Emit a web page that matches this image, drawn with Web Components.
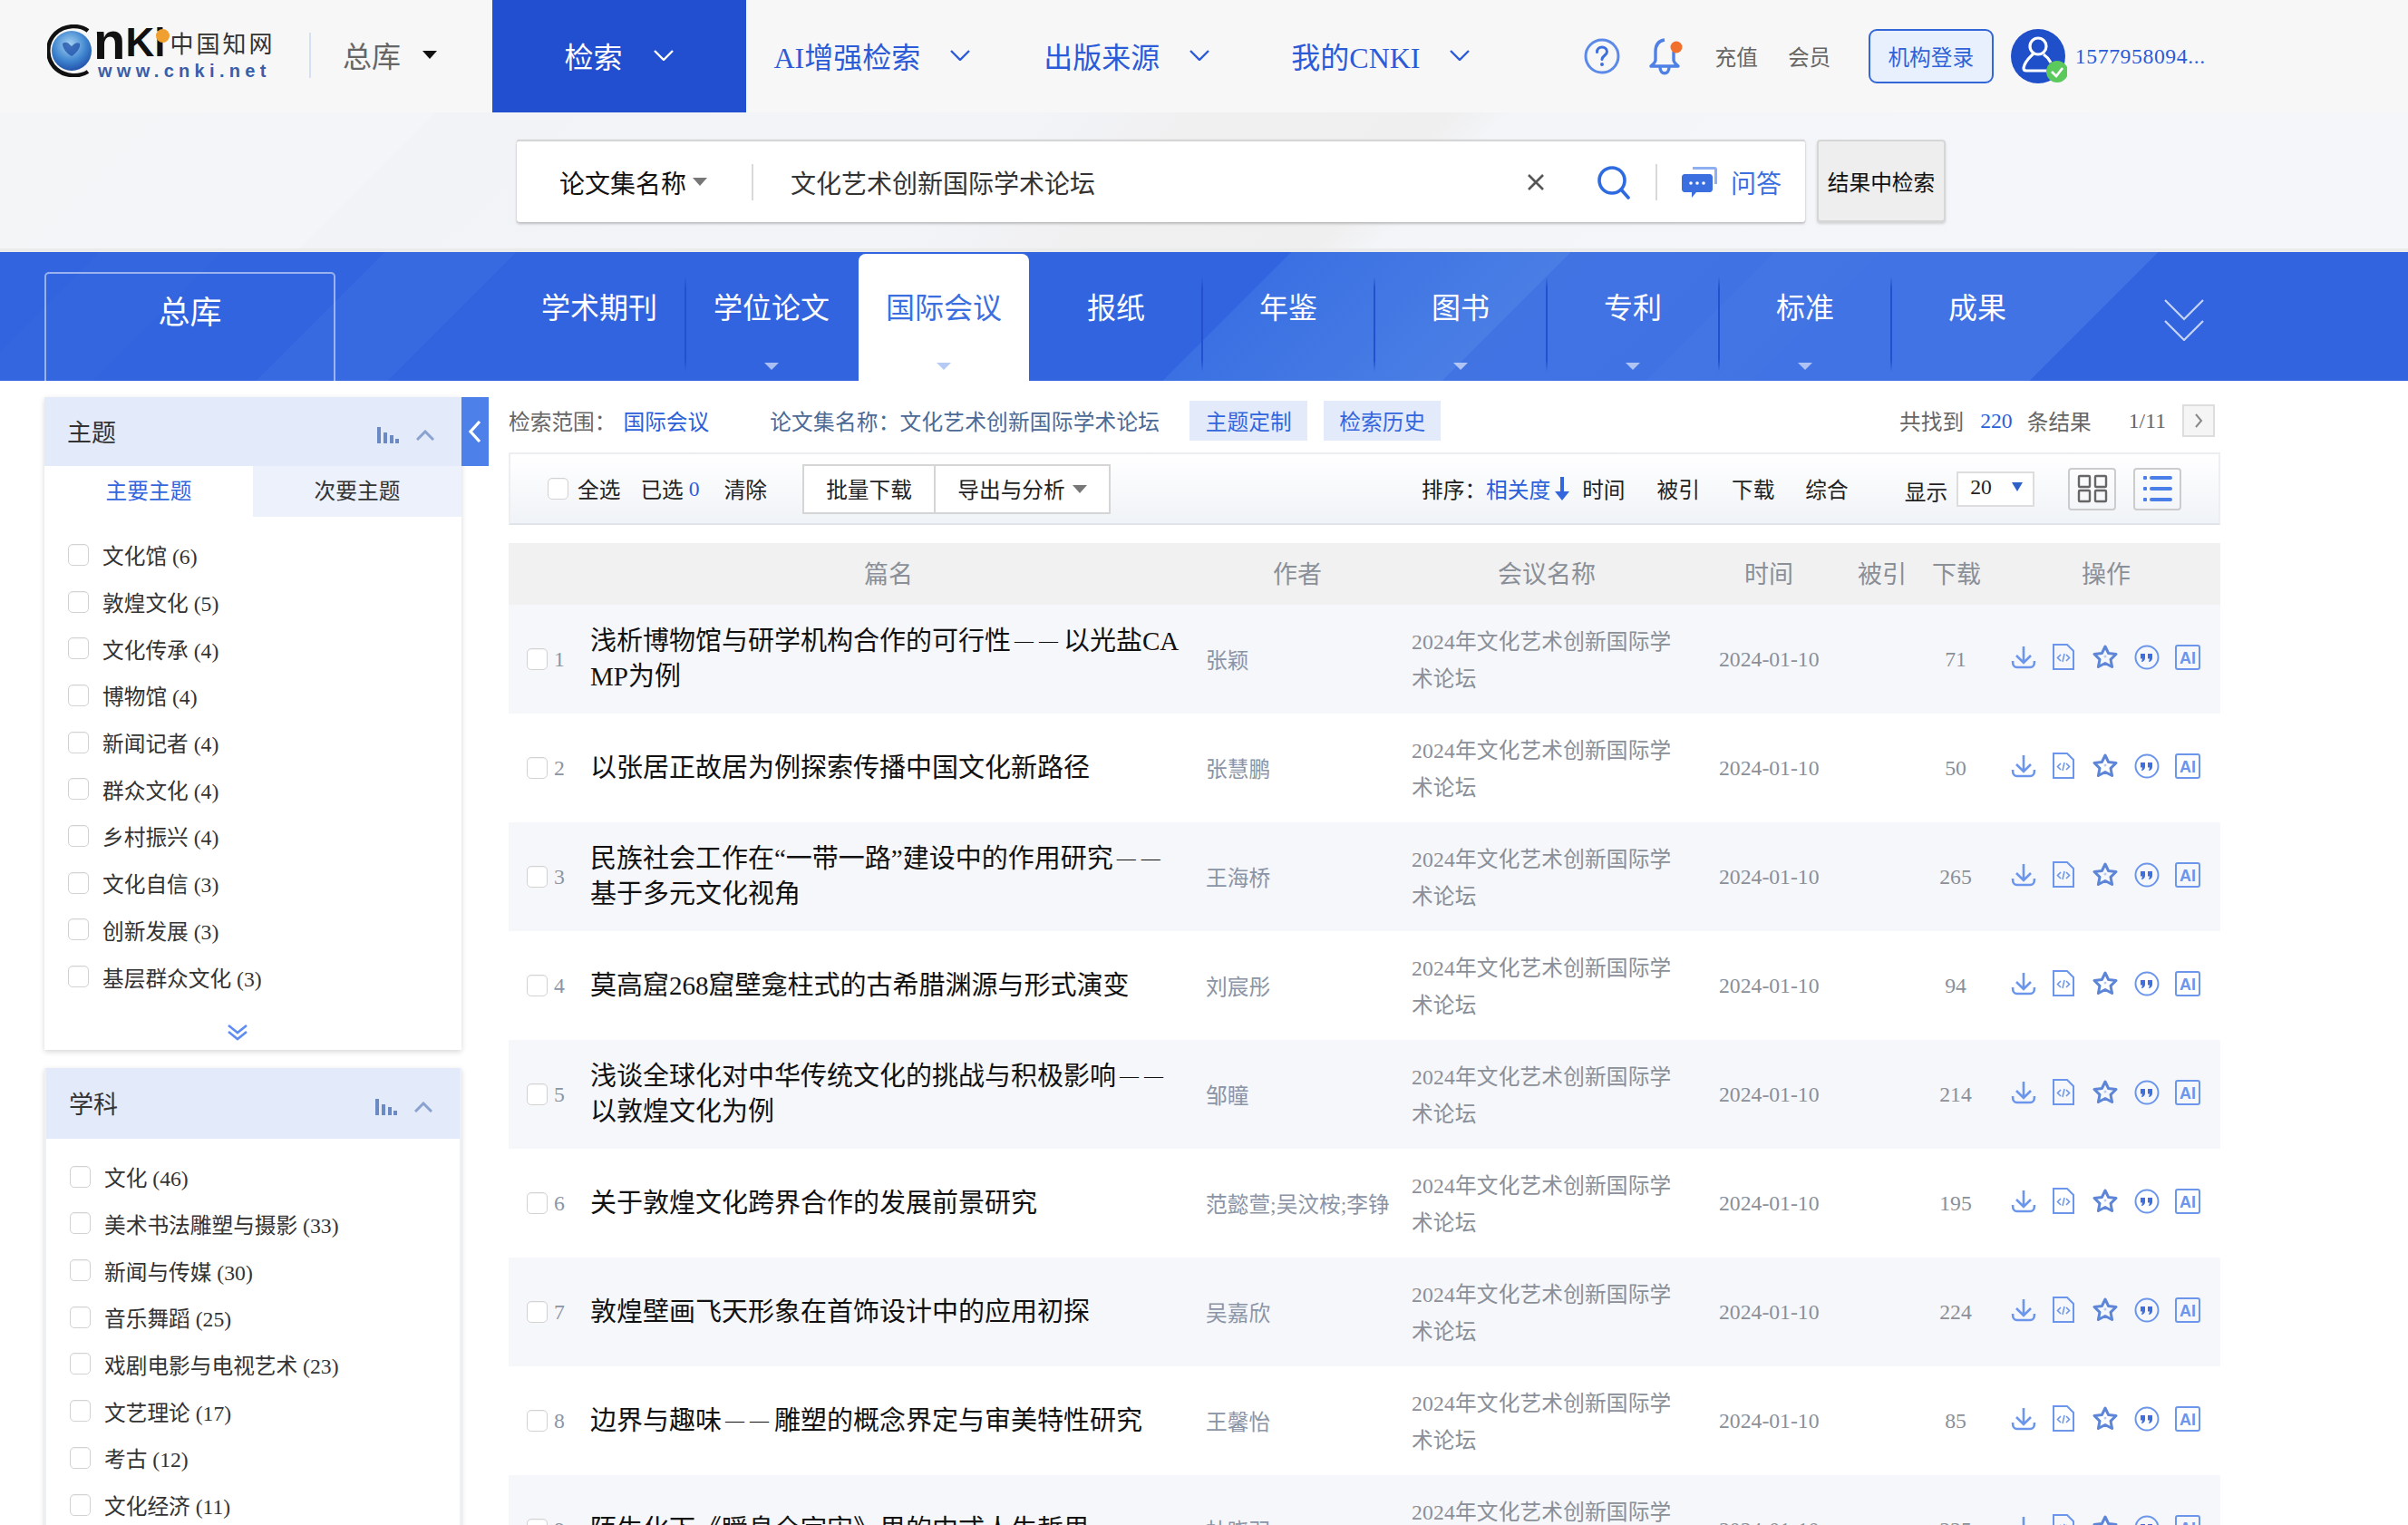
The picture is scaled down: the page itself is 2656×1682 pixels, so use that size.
<!DOCTYPE html>
<html lang="zh-CN">
<head>
<meta charset="utf-8">
<title>文化艺术创新国际学术论坛</title>
<style>
  html, body { margin: 0; height: 100%; overflow: hidden; background: #fff; }
  body { font-family: "Liberation Serif", "Noto Sans CJK SC", serif; font-size: 23.7px; color: #333; }
</style>
</head>
<body>
<cnki-topbar></cnki-topbar>
<cnki-searchbar></cnki-searchbar>
<cnki-dbtabs></cnki-dbtabs>
<cnki-layout>
  <cnki-filter slot="side" heading="主题" tabs items="文化馆 (6)|敦煌文化 (5)|文化传承 (4)|博物馆 (4)|新闻记者 (4)|群众文化 (4)|乡村振兴 (4)|文化自信 (3)|创新发展 (3)|基层群众文化 (3)" more></cnki-filter>
  <cnki-filter slot="side" heading="学科" boxed items="文化 (46)|美术书法雕塑与摄影 (33)|新闻与传媒 (30)|音乐舞蹈 (25)|戏剧电影与电视艺术 (23)|文艺理论 (17)|考古 (12)|文化经济 (11)"></cnki-filter>
  <cnki-crumbs></cnki-crumbs>
  <cnki-toolbar></cnki-toolbar>
  <cnki-results></cnki-results>
</cnki-layout>

<script>
const chev = (color, w = 22, h = 12, sw = 2.4) =>
  `<svg width="${w}" height="${h}" viewBox="0 0 22 12" preserveAspectRatio="none" fill="none" stroke="${color}" stroke-width="${sw}"><path d="M1 1l10 10L21 1"/></svg>`;

class CheckBox extends HTMLElement {
  constructor() {
    super();
    this.attachShadow({ mode: "open" }).innerHTML = `
      <style>
        :host { display: inline-block; width: 23px; height: 24px; box-sizing: border-box; flex: none;
          background: #fff; border: 1.5px solid #d2d2d2; border-radius: 5px; box-shadow: inset 0 1px 1px rgba(0,0,0,.05); }
      </style>`;
  }
}
customElements.define("cnki-check", CheckBox);

class TopBar extends HTMLElement {
  constructor() {
    super();
    this.attachShadow({ mode: "open" }).innerHTML = `
      <style>
        :host { display: flex; align-items: stretch; height: 124px; background: #f7f7f7; }
        .logo { display: grid; grid-template-columns: 51px auto; width: 250px; height: 60px; margin: 27px 0 0 52px; font-family: "Liberation Sans", sans-serif; flex: none; }
        .logo svg { grid-row: 1 / span 2; }
        .brand { display: flex; align-items: flex-start; height: 42px; position: relative; color: #111; font-weight: 700; line-height: 40px; }
        .brand .n { font-size: 58px; line-height: 36px; }
        .brand .k { font-size: 44px; }
        .brand .dot { position: absolute; left: 69px; top: 5px; width: 15px; height: 15px; border-radius: 50%; background: #f0a030; }
        .brand .cn { font: 400 26px/40px "Noto Sans CJK SC", sans-serif; color: #333; margin-left: 5px; letter-spacing: 3px; white-space: nowrap; }
        .www { font-size: 20px; font-weight: 700; color: #3a5ea8; letter-spacing: 5.3px; line-height: 18px; margin-left: 5px; white-space: nowrap; }
        .sep { width: 2px; height: 50px; background: #d6e0f3; margin: 36px 0 0 39px; flex: none; }
        .lib { display: flex; align-items: center; gap: 24px; width: 199.5px; padding: 0 0 4px 35px; box-sizing: border-box; font-size: 32px; color: #666; flex: none; }
        .tri { width: 0; height: 0; border: 8px solid transparent; border-top: 9px solid #111; border-bottom: 0; margin-top: 0; }
        nav { display: flex; align-items: center; color: #2b5bd7; font-size: 32px; white-space: nowrap; }
        nav a { display: flex; align-items: center; height: 100%; padding-bottom: 3px; box-sizing: border-box; }
        .on { background: #214fd0; color: #fff; width: 280px; padding-left: 80px; box-sizing: border-box; gap: 34px; }
        .i1 { margin-left: 31px; gap: 33px; }
        .i2 { margin-left: 81px; gap: 33px; }
        .i3 { margin-left: 90px; gap: 32px; }
        .help { margin-left: 126px; align-self: center; }
        .bell { margin-left: 32px; align-self: center; }
        .small { align-self: center; color: #666; }
        .btn { align-self: center; height: 60px; width: 138px; box-sizing: border-box; margin-left: 41.5px; border: 2px solid #3366d6; border-radius: 9px; background: #e9f0fd; color: #2f62d8; display: flex; align-items: center; justify-content: center; }
        .avatar { align-self: center; margin-left: 19px; }
        .user { align-self: center; margin-left: 9px; letter-spacing: .6px; color: #2b5bd7; white-space: nowrap; }
      </style>
      <div class="logo">
        <svg width="52" height="58" viewBox="0 0 52 58">
          <defs><radialGradient id="g" cx=".45" cy=".35" r=".75"><stop offset="0" stop-color="#a8d4f4"/><stop offset=".55" stop-color="#3f85cf"/><stop offset="1" stop-color="#173f9c"/></radialGradient></defs>
          <path d="M45 7C36 0 20 0 9 10C-2 21-1 39 10 49C20 58 36 58 45 52" fill="none" stroke="#111" stroke-width="4.5"/>
          <circle cx="27" cy="29" r="22" fill="url(#g)"/>
          <path d="M17 21c4-3 7 0 10 3c3-3 6-5 9-3c1 5-4 11-9 14c-5-3-10-8-10-14z" fill="#1f4fa8" opacity=".75"/>
        </svg>
        <div class="brand"><span class="n">n</span><span class="k">Ki</span><i class="dot"></i><span class="cn">中国知网</span></div>
        <div class="www">www.cnki.net</div>
      </div>
      <div class="sep"></div>
      <div class="lib">总库<i class="tri"></i></div>
      <nav>
        <a class="on">检索 ${chev("#fff")}</a>
        <a class="i1">AI增强检索 ${chev("#2b5bd7")}</a>
        <a class="i2">出版来源 ${chev("#2b5bd7")}</a>
        <a class="i3">我的CNKI ${chev("#2b5bd7")}</a>
      </nav>
      <svg class="help" width="40" height="40" viewBox="0 0 40 40" fill="none"><circle cx="20" cy="20" r="18" stroke="#5c8ae8" stroke-width="3"/><path d="M14.5 15.5c0-3.5 2.5-5.5 5.5-5.5s5.5 2 5.5 5c0 4-5.5 4.5-5.5 8.500" stroke="#3f6fdc" stroke-width="3" stroke-linecap="round"/><circle cx="20" cy="29" r="2" fill="#3f6fdc"/></svg>
      <svg class="bell" width="38" height="42" viewBox="0 0 38 42" fill="none"><path d="M17 3c-7 1-10 6-10 13v9c0 3-3 5-5 7h30c-2-2-5-4-5-7v-9" stroke="#4f80e6" stroke-width="3.4" stroke-linejoin="round"/><path d="M12 33c0 9 10 9 10 0" stroke="#4f80e6" stroke-width="3.4"/><circle cx="30" cy="11" r="6.500" fill="#f0702c"/></svg>
      <span class="small" style="margin-left:35px">充值</span>
      <span class="small" style="margin-left:33px">会员</span>
      <div class="btn">机构登录</div>
      <svg class="avatar" width="62" height="62" viewBox="0 0 62 62" fill="none">
        <circle cx="30" cy="31" r="30" fill="#1f4fc9"/>
        <circle cx="30" cy="20" r="9" stroke="#fff" stroke-width="3.2"/>
        <path d="M24 29c-3 3-9 8-10 15c0 2 1 3 3 3h28" stroke="#fff" stroke-width="3.2" stroke-linecap="round"/>
        <path d="M36 29c3 2 6 5 8 9" stroke="#fff" stroke-width="3.2"/>
        <circle cx="51" cy="48" r="12" fill="#5cc95c"/>
        <path d="M45 48l5 5 7-9" stroke="#fff" stroke-width="2.800"/>
      </svg>
      <span class="user">1577958094...</span>`;
  }
}
customElements.define("cnki-topbar", TopBar);

class SearchBar extends HTMLElement {
  constructor() {
    super();
    this.attachShadow({ mode: "open" }).innerHTML = `
      <style>
        :host { display: flex; align-items: flex-start; height: 154px; box-sizing: border-box; padding: 30px 0 0 570px; border-bottom: 4px solid #ebebeb; font-size: 28px;
          background: linear-gradient(135deg, #f4f5f7 0, #f3f5f8 340px, #f1f3f7 340px, #f2f4f8 800px, #f0f0f1 930px, #efefef 1130px, #f3f5f8 1180px, #f4f6f9 1800px); }
        .box { display: flex; align-items: center; width: 1421px; height: 91px; box-sizing: border-box; background: #fff; border-top: 2px solid #d6d6d6; border-radius: 3px; box-shadow: 0 2px 3px rgba(0,0,0,.22), 0 0 1px rgba(0,0,0,.25); }
        .field { width: 259px; padding-left: 47px; box-sizing: border-box; display: flex; align-items: center; gap: 7px; color: #111; }
        .tri { width: 0; height: 0; border: 8px solid transparent; border-top: 9px solid #777; border-bottom: 0; }
        .sep { width: 2px; height: 40px; background: #d9d9d9; flex: none; }
        .q { margin-left: 41px; width: 812px; color: #333; white-space: nowrap; }
        .clear { margin-right: 57px; }
        .search { margin-right: 27px; }
        .chat { margin: 0 14px 0 27px; }
        .ask { color: #3b6fe0; }
        .in { width: 142px; height: 91px; box-sizing: border-box; margin-left: 13px; background: #eee; border: 2px solid #d6d6d6; border-radius: 4px; box-shadow: 0 2px 3px rgba(0,0,0,.15); display: flex; align-items: center; justify-content: center; font-size: 23.7px; color: #111; }
      </style>
      <div class="box">
        <div class="field">论文集名称<i class="tri"></i></div>
        <div class="sep"></div>
        <div class="q">文化艺术创新国际学术论坛</div>
        <svg class="clear" width="20" height="20" viewBox="0 0 20 20" stroke="#555" stroke-width="2.6"><path d="M2 2l16 16M18 2L2 18"/></svg>
        <svg class="search" width="38" height="38" viewBox="0 0 38 38" fill="none" stroke="#2f6be0" stroke-width="3.600"><circle cx="17" cy="17" r="14"/><path d="M27 27l8 9" stroke-linecap="round"/></svg>
        <div class="sep"></div>
        <svg class="chat" width="40" height="36" viewBox="0 0 40 36"><path d="M12 1h24c2 0 3 1 3 3v16h-3V4H12z" fill="#8fb0f0"/><path d="M3 9h28c1.500 0 3 1.500 3 3v14c0 1.500-1.500 3-3 3H16l-5 6v-6H3c-1.500 0-3-1.500-3-3V12c0-1.500 1.500-3 3-3z" fill="#3b6fe0"/><circle cx="10" cy="19" r="1.800" fill="#fff"/><circle cx="17" cy="19" r="1.800" fill="#fff"/><circle cx="24" cy="19" r="1.800" fill="#fff"/></svg>
        <span class="ask">问答</span>
      </div>
      <div class="in">结果中检索</div>`;
  }
}
customElements.define("cnki-searchbar", SearchBar);

class DbTabs extends HTMLElement {
  constructor() {
    super();
    const tabs = [["学术期刊"], ["学位论文", 1], ["国际会议", 1, 1], ["报纸"], ["年鉴"], ["图书", 1], ["专利", 1], ["标准", 1], ["成果"]];
    this.attachShadow({ mode: "open" }).innerHTML = `
      <style>
        :host { display: flex; height: 142px; color: #fff; font-size: 32px; overflow: hidden;
          background: linear-gradient(135deg, #3264df 0, #3264df 78px, #3467df 78px, #3467df 173px, #3264df 173px, #3264df 300px, #3769e0 300px, #3769e0 403px, #3264df 403px, #3264df 1007px, #3a70e2 1007px, #4a7ee5 1225px, #4173e3 1225px, #4072e3 1384px, #4375e4 1384px, #4274e4 1466px, #4173e4 1466px, #4173e4 1683px, #3264df 1683px); }
        .all { width: 321px; height: 120px; margin: 22px 0 0 49px; box-sizing: border-box; border: 2px solid rgba(255,255,255,.5); border-bottom: 0; border-radius: 5px 5px 0 0; font-size: 35px; text-align: center; padding-top: 20px; line-height: 48px; }
        .tabs { display: flex; margin-left: 197px; }
        .t { width: 190px; height: 142px; box-sizing: border-box; position: relative; text-align: center; padding-top: 40px; line-height: 44px; border-right: 2px solid transparent; }
        .t::after { content: ""; position: absolute; right: -2px; top: 27px; height: 105px; width: 2px; background: linear-gradient(#3264df00, #2350cf 12%, #2350cf 88%, #3264df00); }
        .t.on { background: #fff; color: #3b6fe0; width: 188px; margin: 2px 2px 0 0; height: 140px; padding-top: 38px; border: 0; border-radius: 8px 8px 0 0; }
        .t.on::after, .t.pre::after, .t:last-child::after { display: none; }
        .tri { position: absolute; left: 50%; top: 122px; margin-left: -8px; width: 0; height: 0; border: 8px solid transparent; border-top: 8px solid rgba(255,255,255,.58); border-bottom: 0; }
        .on .tri { border-top-color: #b6cbf3; top: 120px; }
        .more { margin: 52px 0 0 110px; }
      </style>
      <div class="all">总库</div>
      <div class="tabs">
        ${tabs.map(([n, c, on], i) => `<div class="t ${on ? "on" : ""} ${i === 1 ? "pre" : ""}">${n}${c ? '<i class="tri"></i>' : ""}</div>`).join("")}
      </div>
      <svg class="more" width="44" height="46" viewBox="0 0 44 46" fill="none" stroke="#fff" stroke-opacity=".72" stroke-width="2.200"><path d="M1 1l21 21L43 1M1 24l21 21 21-21"/></svg>`;
  }
}
customElements.define("cnki-dbtabs", DbTabs);

class Layout extends HTMLElement {
  constructor() {
    super();
    this.attachShadow({ mode: "open" }).innerHTML = `
      <style>
        :host { display: flex; align-items: flex-start; padding-left: 49px; }
        .side { width: 460px; flex: none; display: flex; flex-direction: column; gap: 20px; padding-top: 18px; }
        .fold { width: 30px; height: 76px; margin-top: 18px; background: #4d80e8; display: flex; align-items: center; justify-content: center; flex: none; }
        main { width: 1888px; margin-left: 22px; display: flex; flex-direction: column; flex: none; }
      </style>
      <div class="side"><slot name="side"></slot></div>
      <div class="fold"><svg width="14" height="24" viewBox="0 0 14 24" fill="none" stroke="#fff" stroke-width="3.200"><path d="M12 1L2 12l10 11"/></svg></div>
      <main><slot></slot></main>`;
  }
}
customElements.define("cnki-layout", Layout);

class Filter extends HTMLElement {
  constructor() {
    super();
    const items = this.getAttribute("items").split("|");
    const boxed = this.hasAttribute("boxed");
    this.attachShadow({ mode: "open" }).innerHTML = `
      <style>
        :host { display: block; background: #fff; box-shadow: 0 2px 6px rgba(0,0,0,.16); box-sizing: border-box; ${boxed ? "border: 2px solid #edf0f6; border-bottom: 0; border-top: 0; padding-bottom: 20px;" : ""} }
        header { display: flex; align-items: center; height: ${boxed ? 78 : 76}px; box-sizing: border-box; padding: 0 30px 0 25px; background: #e3ebfa; font-size: 27px; color: #333; }
        header b { font-weight: 400; margin-right: auto; margin-top: ${boxed ? 0 : -2}px; }
        header svg { margin-top: 8px; }
        .bars { margin-right: 19px; }
        .tabs { display: flex; height: 56px; line-height: 56px; text-align: center; }
        .tabs div { flex: 1; }
        .tabs .on { color: #3366dd; }
        .tabs div:last-child { background: #ecf1fb; }
        ul { list-style: none; margin: 0; padding: 16px 0 0 26px; }
        li { display: flex; align-items: center; height: 51.7px; gap: 15px; color: #333; white-space: nowrap; }
        li span { margin-top: 1px; }
        .more { display: block; margin: 27px 0 10px 202px; }
      </style>
      <header><b>${this.getAttribute("heading")}</b>
        <svg class="bars" width="24" height="18" viewBox="0 0 24 18" fill="#6b8ac4"><rect width="4" height="18"/><rect x="7" y="6" width="4" height="12"/><rect x="14" y="9" width="4" height="9"/><rect x="20" y="13" width="4" height="5"/></svg>
        <svg width="20" height="12" viewBox="0 0 20 12" fill="none" stroke="#8aa2d0" stroke-width="3"><path d="M1 11l9-9 9 9"/></svg>
      </header>
      ${this.hasAttribute("tabs") ? '<div class="tabs"><div class="on">主要主题</div><div>次要主题</div></div>' : ""}
      <ul>${items.map((t) => `<li><cnki-check></cnki-check><span>${t}</span></li>`).join("")}</ul>
      ${this.hasAttribute("more") ? '<svg class="more" width="22" height="18" viewBox="0 0 22 18" fill="none" stroke="#5f8cf0" stroke-width="2.600"><path d="M1 1l10 8 10-8M1 8l10 8 10-8"/></svg>' : ""}`;
  }
}
customElements.define("cnki-filter", Filter);

class Crumbs extends HTMLElement {
  constructor() {
    super();
    this.attachShadow({ mode: "open" }).innerHTML = `
      <style>
        :host { display: flex; align-items: center; height: 44px; margin: 22px 0 13px; white-space: nowrap; color: #666; }
        .blue { color: #2b5fd9; }
        .name { color: #4b6a96; margin-left: 67px; letter-spacing: .2px; }
        .tag { width: 130px; height: 44px; background: #e3ebfb; color: #3366dd; display: flex; align-items: center; justify-content: center; }
        .pg { display: flex; align-items: center; margin-left: auto; }
        .next { width: 36px; height: 36px; box-sizing: border-box; background: #f5f5f5; border: 2px solid #ddd; display: flex; align-items: center; justify-content: center; margin: 0 6px 0 18px; }
      </style>
      <span>检索范围：</span><span class="blue" style="margin-left:8px">国际会议</span>
      <span class="name">论文集名称：文化艺术创新国际学术论坛</span>
      <span class="tag" style="margin-left:33px">主题定制</span>
      <span class="tag" style="margin-left:18px;width:129px">检索历史</span>
      <div class="pg">
        <span>共找到</span><span class="blue" style="margin:0 16px 0 18px">220</span><span>条结果</span>
        <span style="margin-left:41px">1/11</span>
        <div class="next"><svg width="10" height="16" viewBox="0 0 10 16" fill="none" stroke="#888" stroke-width="2"><path d="M2 1l6 7-6 7"/></svg></div>
      </div>`;
  }
}
customElements.define("cnki-crumbs", Crumbs);

class Toolbar extends HTMLElement {
  constructor() {
    super();
    this.attachShadow({ mode: "open" }).innerHTML = `
      <style>
        :host { display: flex; align-items: center; height: 80px; box-sizing: border-box; padding-left: 41px; border: 2px solid #eceef2; border-bottom-color: #dfe3ea; background: linear-gradient(#fff, #f0f3f7); color: #222; white-space: nowrap; margin-bottom: 20px; }
        .btn { height: 55px; box-sizing: border-box; background: #fff; border: 2.5px solid #d5d5d5; display: flex; align-items: center; justify-content: center; gap: 8px; flex: none; }
        .tri { width: 0; height: 0; border: 8px solid transparent; border-top: 9px solid #777; border-bottom: 0; }
        .blue { color: #2b5fd9; }
        .sel { width: 86px; height: 39px; box-sizing: border-box; margin-left: 10px; border: 2px solid #ddd; background: #fff; display: flex; align-items: center; padding: 0 0 4px 13px; gap: 22px; }
        .sel .d { width: 0; height: 0; border: 6.500px solid transparent; border-top: 10px solid #2f62c8; border-bottom: 0; }
        .view { width: 53px; height: 47px; box-sizing: border-box; border: 2px solid #ccc; border-radius: 4px; display: flex; align-items: center; justify-content: center; flex: none; }
      </style>
      <cnki-check></cnki-check>
      <span style="margin-left:10px">全选</span>
      <span style="margin-left:22px">已选</span><span class="blue" style="margin-left:6px">0</span>
      <span style="margin-left:27px">清除</span>
      <div class="btn" style="margin-left:39px;width:147px">批量下载</div>
      <div class="btn" style="width:193px;border-left:0">导出与分析<i class="tri"></i></div>
      <span style="margin-left:343px">排序：</span><span class="blue">相关度</span>
      <svg style="margin-left:5px" width="16" height="26" viewBox="0 0 16 26" fill="#3366dd"><path d="M6 0h4v16h6L8 26 0 16h6z"/></svg>
      <span style="margin-left:14px">时间</span>
      <span style="margin-left:35px">被引</span>
      <span style="margin-left:35px">下载</span>
      <span style="margin-left:34px">综合</span>
      <span style="margin-left:62px;margin-top:6px">显示</span>
      <div class="sel">20<i class="d"></i></div>
      <div class="view" style="margin-left:37px"><svg width="34" height="32" viewBox="0 0 34 32" fill="none" stroke="#666" stroke-width="2.400"><rect x="2" y="2" width="12" height="12" rx="1"/><rect x="20" y="2" width="12" height="12" rx="1"/><rect x="2" y="18" width="12" height="12" rx="1"/><rect x="20" y="18" width="12" height="12" rx="1"/></svg></div>
      <div class="view" style="margin-left:19px"><svg width="32" height="30" viewBox="0 0 32 30" fill="#4a7fe8"><rect y="1" width="4" height="4" rx="1"/><rect x="7" y="1" width="25" height="4" rx="2"/><rect y="13" width="4" height="4" rx="1"/><rect x="7" y="13" width="25" height="4" rx="2"/><rect y="25" width="4" height="4" rx="1"/><rect x="7" y="25" width="25" height="4" rx="2"/></svg></div>`;
  }
}
customElements.define("cnki-toolbar", Toolbar);

class ResultRow extends HTMLElement {
  constructor() {
    super();
    const a = (n) => this.getAttribute(n);
    const title = a("ti").replace("|", "<br>").replace("——", '<span class="dash">——</span>');
    this.attachShadow({ mode: "open" }).innerHTML = `
      <style>
        :host { display: grid; grid-template-columns: 90px 679px 227px 339px 219px 84px 250px; align-items: center; height: 120px; color: #8a8f98; }
        :host([shade]) { background: #f6f7fa; }
        .no { display: flex; align-items: center; padding-left: 20px; gap: 7px; color: #8a95a5; }
        .ti { font-size: 29px; line-height: 39px; color: #111; white-space: nowrap; }
        .dash { font-size: 21px; letter-spacing: 6px; padding-left: 4px; vertical-align: 3px; line-height: 1; }
        .au { color: #8a94a6; white-space: nowrap; }
        .co { width: 300px; line-height: 41px; letter-spacing: .15px; margin-top: 3px; }
        .dl { text-align: center; }
        .ops { display: flex; align-items: center; padding-left: 19px; gap: 18px; margin-top: -5px; }
        svg { flex: none; }
      </style>
      <div class="no"><cnki-check></cnki-check>${a("no")}</div>
      <div class="ti">${title}</div>
      <div class="au">${a("au")}</div>
      <div class="co">2024年文化艺术创新国际学术论坛</div>
      <div>2024-01-10</div>
      <div class="dl">${a("dl")}</div>
      <div class="ops">
        <svg width="28" height="26" viewBox="0 0 28 26" fill="none" stroke="#6b96ec" stroke-width="2.600"><path d="M14 1v18M6 11l8 8 8-8"/><path d="M2 17c0 5 1 7 5 7h14c4 0 5-2 5-7"/></svg>
        <svg width="24" height="29" viewBox="0 0 24 29" fill="none" stroke="#6b96ec" stroke-width="2"><path d="M1 1h15l7 7v20H1z"/><path d="M9 12l-3.500 3.500L9 19M15 12l3.500 3.500L15 19" stroke-width="1.600"/><path d="M13 11l-2 9" stroke-width="1.500"/></svg>
        <svg style="margin-left:2px" width="28" height="27" viewBox="0 0 28 27" fill="none" stroke="#5d86d8" stroke-width="3" stroke-linejoin="round"><path d="M14 2l3.600 7.500 8.400 1-6 5.800 1.600 8.200-7.600-4-7.600 4 1.600-8.200-6-5.800 8.400-1z"/><circle cx="14" cy="13" r="1.500" fill="#b7ccf3" stroke="none"/></svg>
        <svg width="28" height="28" viewBox="0 0 28 28" fill="none"><circle cx="14" cy="14" r="12.500" stroke="#6b96ec" stroke-width="2"/><path d="M7 10h5v5c0 2-2 4-4 4l1-3.500H7zM15 10h5v5c0 2-2 4-4 4l1-3.500h-2z" fill="#3f6fdc"/></svg>
        <svg width="28" height="28" viewBox="0 0 28 28" fill="none" style="margin-left:-1px"><rect x="1" y="1" width="26" height="26" rx="2" stroke="#6b96ec" stroke-width="2"/><text x="14" y="21" text-anchor="middle" font-family="Liberation Sans, sans-serif" font-size="18" font-weight="700" fill="#6b96ec">AI</text></svg>
      </div>`;
  }
}
customElements.define("cnki-row", ResultRow);

class Results extends HTMLElement {
  constructor() {
    super();
    const rows = [
      ["浅析博物馆与研学机构合作的可行性——以光盐CA|MP为例", "张颖", 71],
      ["以张居正故居为例探索传播中国文化新路径", "张慧鹏", 50],
      ["民族社会工作在“一带一路”建设中的作用研究——|基于多元文化视角", "王海桥", 265],
      ["莫高窟268窟壁龛柱式的古希腊渊源与形式演变", "刘宸彤", 94],
      ["浅谈全球化对中华传统文化的挑战与积极影响——|以敦煌文化为例", "邹瞳", 214],
      ["关于敦煌文化跨界合作的发展前景研究", "范懿萱;吴汶桉;李铮", 195],
      ["敦煌壁画飞天形象在首饰设计中的应用初探", "吴嘉欣", 224],
      ["边界与趣味——雕塑的概念界定与审美特性研究", "王馨怡", 85],
      ["陌生化下《瞬息全宇宙》里的中式人生哲思", "杜晓羽", 225],
    ];
    this.attachShadow({ mode: "open" }).innerHTML = `
      <style>
        :host { display: block; }
        .head { display: grid; grid-template-columns: 770px 200px 350px 140px 110px 52px 266px; align-items: center; height: 68px; padding-bottom: 3px; box-sizing: border-box; background: #f1f1f1; color: #8a8f98; font-size: 27px; text-align: center; white-space: nowrap; }
      </style>
      <div class="head">
        <div style="padding-left:68px">篇名</div><div>作者</div><div>会议名称</div><div>时间</div><div>被引</div><div>下载</div><div style="padding-left:14px">操作</div>
      </div>
      ${rows.map(([ti, au, dl], i) => `<cnki-row ${i % 2 ? "" : "shade"} no="${i + 1}" ti="${ti}" au="${au}" dl="${dl}"></cnki-row>`).join("")}`;
  }
}
customElements.define("cnki-results", Results);
</script>
</body>
</html>
